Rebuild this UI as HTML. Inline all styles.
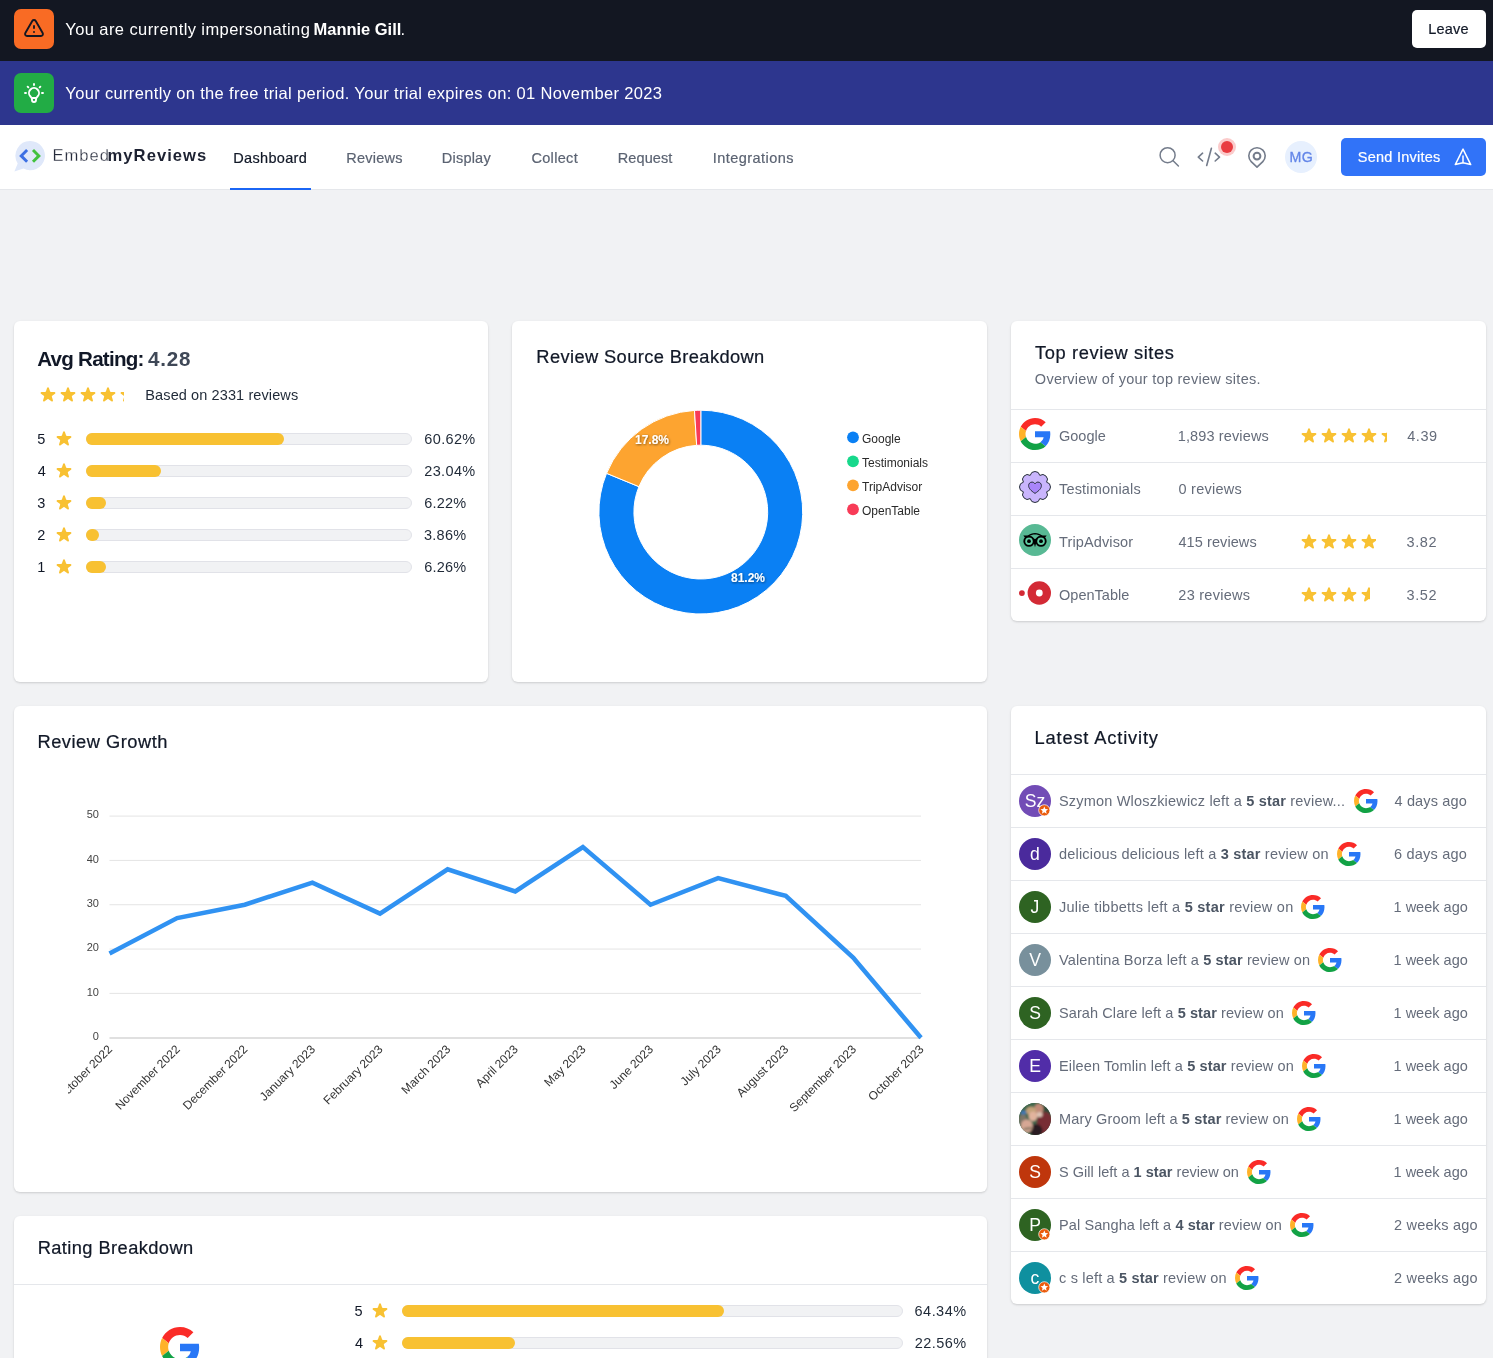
<!DOCTYPE html>
<html lang="en"><head><meta charset="utf-8"><title>Dashboard - EmbedMyReviews</title>
<style>
html,body{margin:0;padding:0}
body{width:1493px;height:1358px;overflow:hidden;position:relative;background:#f1f2f4;font-family:"Liberation Sans",sans-serif;}
#root{position:absolute;left:0;top:0;width:1493px;height:1358px;overflow:hidden;will-change:transform}
.a{position:absolute;display:block}
.t{position:absolute;white-space:nowrap;line-height:20px;display:block}
.t b{font-weight:700;color:#4b5563}
.card{position:absolute;background:#fff;border-radius:6px;box-shadow:0 1px 3px rgba(0,0,0,.10),0 1px 2px rgba(0,0,0,.07)}
.hr{position:absolute;height:1px;background:#e5e7eb}
.trk{position:absolute;height:12px;box-sizing:border-box;border:1px solid #e1e2e8;background:#f1f2f4;border-radius:6px}
.trk i{position:absolute;left:-1px;top:-1px;height:12px;background:#f8c132;border-radius:6px;display:block}
.av{position:absolute;width:32px;height:32px;border-radius:50%;color:#fff;text-align:center;line-height:32px;font-size:17.6px}
</style></head>
<body>
<div id="root">

<div class="a" style="left:0;top:0;width:1493px;height:61px;background:#131722"></div>
<div class="a" style="left:0;top:61px;width:1493px;height:64px;background:#2d368e"></div>
<div class="a" style="left:14px;top:9px;width:40px;height:40px;border-radius:7px;background:#f96b24"></div>
<svg class="a" style="left:22px;top:16.5px" width="24" height="24" viewBox="0 0 24 24" fill="none" stroke="#131722" stroke-width="1.9" stroke-linecap="round" stroke-linejoin="round"><path d="M12 9v2m0 4h.01m-6.938 4h13.856c1.54 0 2.502-1.667 1.732-3L13.732 4c-.77-1.333-2.694-1.333-3.464 0L3.34 16c-.77 1.333.192 3 1.732 3z"/></svg>
<div class="a" style="left:14px;top:73px;width:40px;height:40px;border-radius:7px;background:#22ac45"></div>
<svg class="a" style="left:22px;top:81px" width="24" height="24" viewBox="0 0 24 24" fill="none" stroke="#fff" stroke-width="1.9" stroke-linecap="round" stroke-linejoin="round"><path d="M9.663 17h4.673M12 3v1m6.364 1.636l-.707.707M21 12h-1M4 12H3m3.343-5.657l-.707-.707m2.828 9.9a5 5 0 117.072 0l-.548.547A3.374 3.374 0 0014 18.469V19a2 2 0 11-4 0v-.531c0-.895-.356-1.754-.988-2.386l-.548-.547z"/></svg>
<span class="t " id="b1a" style="left:65.32px;top:19.28px;font-size:16.5px;color:#fff;letter-spacing:0.407px;">You are currently impersonating</span>
<span class="t " id="b1b" style="left:313.62px;top:19.28px;font-size:16.5px;color:#fff;font-weight:700;letter-spacing:-0.031px;">Mannie Gill</span>
<span class="t " id="b1c" style="left:400.59px;top:19.28px;font-size:16.5px;color:#fff;">.</span>
<span class="t " id="b2" style="left:65.32px;top:83.28px;font-size:16.5px;color:#fff;letter-spacing:0.339px;">Your currently on the free trial period. Your trial expires on: 01 November 2023</span>
<div class="a" style="left:1412px;top:10px;width:74px;height:38px;border-radius:5px;background:#fff"></div>
<span class="t " id="leave" style="left:1428.26px;top:18.98px;font-size:14.5px;color:#111827;letter-spacing:0.219px;-webkit-text-stroke:0.2px #111827;">Leave</span>
<div class="a" style="left:0;top:125px;width:1493px;height:64px;background:#fff;border-bottom:1px solid #e5e7eb"></div>
<svg class="a" style="left:12px;top:138px" width="36" height="36" viewBox="0 0 36 36"><path fill="#dfe8fa" d="M18.4 3.1a14.6 14.6 0 1 1-6.9 27.5L2.4 33.5l3.3-8.1A14.6 14.6 0 0 1 18.4 3.100z"/><path fill="none" stroke="#3c6fe3" stroke-width="2.9" d="M15.1 12l-5.9 5.9 5.9 5.9"/><path fill="none" stroke="#42c13e" stroke-width="2.9" d="M21 12l5.9 5.9-5.9 5.9"/></svg>
<span class="t thin" id="lg1" style="left:52.54px;top:146.25px;font-size:16.6px;color:#262b3b;letter-spacing:0.961px;-webkit-text-stroke:0.28px #fff;">Embed</span>
<span class="t " id="lg2" style="left:107.57px;top:146.25px;font-size:16.6px;color:#1d2232;font-weight:700;letter-spacing:1.038px;">myReviews</span>
<div class="a" style="left:230px;top:188px;width:81px;height:2px;background:#1b66f5"></div>
<span class="t " id="nav0" style="left:233.19px;top:147.98px;font-size:14.5px;color:#111827;letter-spacing:0.336px;-webkit-text-stroke:0.2px #111827;">Dashboard</span>
<span class="t " id="nav1" style="left:346.35px;top:147.98px;font-size:14.5px;color:#5b6372;letter-spacing:0.212px;-webkit-text-stroke:0.2px #5b6372;">Reviews</span>
<span class="t " id="nav2" style="left:441.86px;top:147.98px;font-size:14.5px;color:#5b6372;letter-spacing:0.204px;-webkit-text-stroke:0.2px #5b6372;">Display</span>
<span class="t " id="nav3" style="left:531.39px;top:147.98px;font-size:14.5px;color:#5b6372;letter-spacing:0.340px;-webkit-text-stroke:0.2px #5b6372;">Collect</span>
<span class="t " id="nav4" style="left:617.82px;top:147.98px;font-size:14.5px;color:#5b6372;letter-spacing:0.086px;-webkit-text-stroke:0.2px #5b6372;">Request</span>
<span class="t " id="nav5" style="left:712.75px;top:147.98px;font-size:14.5px;color:#5b6372;letter-spacing:0.459px;-webkit-text-stroke:0.2px #5b6372;">Integrations</span>
<svg class="a" style="left:1155px;top:143px" width="28" height="28" viewBox="0 0 28 28" fill="none" stroke="#747c8b" stroke-width="1.5" stroke-linecap="round"><circle cx="12.6" cy="12.2" r="7.5"/><path d="M18.1 17.7l5.3 5.3"/></svg>
<svg class="a" style="left:1195px;top:143px" width="28" height="28" viewBox="0 0 28 28" fill="none" stroke="#747c8b" stroke-width="1.6" stroke-linecap="round" stroke-linejoin="round"><path d="M7.6 10.2L3.3 14.1l4.3 3.9M16.4 5.2l-4.7 17.3M20.2 10.2l4.3 3.9-4.3 3.900"/></svg>
<div class="a" style="left:1221px;top:141px;width:12px;height:12px;border-radius:50%;background:#e93c41;box-shadow:0 0 0 3px rgba(239,68,68,.28)"></div>
<svg class="a" style="left:1245px;top:144px" width="24" height="26" viewBox="0 0 24 26" fill="none" stroke="#747c8b" stroke-linejoin="round"><path stroke-width="1.6" d="M12 3.8c4.6 0 8.2 3.6 8.2 8 0 2.300-.9 4.300-2.400 5.800L12 23.200l-5.800-5.600C4.700 16.100 3.800 14.100 3.800 11.800c0-4.400 3.600-8 8.200-8z"/><circle cx="12" cy="12.100" r="3.400" stroke-width="2"/></svg>
<div class="a" style="left:1285px;top:141px;width:32px;height:32px;border-radius:50%;background:#e7f0fe"></div>
<span class="t " id="mg" style="left:1289.39px;top:147.08px;font-size:14.2px;color:#6386e8;letter-spacing:0.590px;-webkit-text-stroke:0.3px #6386e8;">MG</span>
<div class="a" style="left:1341px;top:138px;width:145px;height:38px;border-radius:5px;background:#3173f8"></div>
<span class="t " id="send" style="left:1357.81px;top:146.98px;font-size:14.5px;color:#fff;letter-spacing:0.247px;-webkit-text-stroke:0.2px #fff;">Send Invites</span>
<svg class="a" style="left:1451px;top:145px" width="24" height="24" viewBox="0 0 24 24" fill="none" stroke="#fff" stroke-width="1.5" stroke-linejoin="round" stroke-linecap="round"><path d="M12 4.100L4.300 19.600 12 17.700l7.700 1.900L12 4.100zM12 17.700V11"/></svg>
<div class="card" style="left:14px;top:321px;width:474px;height:361px"></div>
<div class="card" style="left:512px;top:321px;width:475px;height:361px"></div>
<div class="card" style="left:1011px;top:321px;width:475px;height:300px"></div>
<div class="card" style="left:14px;top:706px;width:973px;height:486px"></div>
<div class="card" style="left:1011px;top:706px;width:475px;height:598px"></div>
<div class="card" style="left:14px;top:1216px;width:973px;height:200px"></div>
<span class="t " id="avg1" style="left:37.23px;top:348.86px;font-size:20.6px;color:#111827;font-weight:700;letter-spacing:-0.763px;">Avg Rating:</span>
<span class="t " id="avg2" style="left:148.09px;top:348.86px;font-size:20.6px;color:#3f4857;font-weight:700;letter-spacing:0.777px;">4.28</span>
<div class="a" style="left:38.2px;top:385.2px;width:85.60px;height:20px;overflow:hidden"><svg width="100" height="20" viewBox="0 0 100 20" style="display:block">
<path fill="#f8c132" transform="translate(0 0)" d="M9.049 2.927c.3-.921 1.603-.921 1.902 0l1.07 3.292a1 1 0 00.95.69h3.462c.969 0 1.371 1.24.588 1.81l-2.8 2.034a1 1 0 00-.364 1.118l1.07 3.292c.3.921-.755 1.688-1.54 1.118l-2.8-2.034a1 1 0 00-1.175 0l-2.8 2.034c-.784.57-1.838-.197-1.539-1.118l1.07-3.292a1 1 0 00-.364-1.118L2.98 8.72c-.783-.57-.38-1.81.588-1.81h3.461a1 1 0 00.951-.69l1.07-3.292z"/>
<path fill="#f8c132" transform="translate(20 0)" d="M9.049 2.927c.3-.921 1.603-.921 1.902 0l1.07 3.292a1 1 0 00.95.69h3.462c.969 0 1.371 1.24.588 1.81l-2.8 2.034a1 1 0 00-.364 1.118l1.07 3.292c.3.921-.755 1.688-1.54 1.118l-2.8-2.034a1 1 0 00-1.175 0l-2.8 2.034c-.784.57-1.838-.197-1.539-1.118l1.07-3.292a1 1 0 00-.364-1.118L2.98 8.72c-.783-.57-.38-1.81.588-1.81h3.461a1 1 0 00.951-.69l1.07-3.292z"/>
<path fill="#f8c132" transform="translate(40 0)" d="M9.049 2.927c.3-.921 1.603-.921 1.902 0l1.07 3.292a1 1 0 00.95.69h3.462c.969 0 1.371 1.24.588 1.81l-2.8 2.034a1 1 0 00-.364 1.118l1.07 3.292c.3.921-.755 1.688-1.54 1.118l-2.8-2.034a1 1 0 00-1.175 0l-2.8 2.034c-.784.57-1.838-.197-1.539-1.118l1.07-3.292a1 1 0 00-.364-1.118L2.98 8.72c-.783-.57-.38-1.81.588-1.81h3.461a1 1 0 00.951-.69l1.07-3.292z"/>
<path fill="#f8c132" transform="translate(60 0)" d="M9.049 2.927c.3-.921 1.603-.921 1.902 0l1.07 3.292a1 1 0 00.95.69h3.462c.969 0 1.371 1.24.588 1.81l-2.8 2.034a1 1 0 00-.364 1.118l1.07 3.292c.3.921-.755 1.688-1.54 1.118l-2.8-2.034a1 1 0 00-1.175 0l-2.8 2.034c-.784.57-1.838-.197-1.539-1.118l1.07-3.292a1 1 0 00-.364-1.118L2.98 8.72c-.783-.57-.38-1.81.588-1.81h3.461a1 1 0 00.951-.69l1.07-3.292z"/>
<path fill="#f8c132" transform="translate(80 0)" d="M9.049 2.927c.3-.921 1.603-.921 1.902 0l1.07 3.292a1 1 0 00.95.69h3.462c.969 0 1.371 1.24.588 1.81l-2.8 2.034a1 1 0 00-.364 1.118l1.07 3.292c.3.921-.755 1.688-1.54 1.118l-2.8-2.034a1 1 0 00-1.175 0l-2.8 2.034c-.784.57-1.838-.197-1.539-1.118l1.07-3.292a1 1 0 00-.364-1.118L2.98 8.72c-.783-.57-.38-1.81.588-1.81h3.461a1 1 0 00.951-.69l1.07-3.292z"/>
</svg></div>
<span class="t " id="based" style="left:145.34px;top:384.98px;font-size:14.5px;color:#1f2937;letter-spacing:0.107px;">Based on 2331 reviews</span>
<span class="t " id="r1n0" style="left:37.15px;top:428.98px;font-size:14.5px;color:#111827;">5</span>
<svg class="a" style="left:54.1px;top:429px" width="20" height="20" viewBox="0 0 20 20"><path fill="#f8c132" d="M9.049 2.927c.3-.921 1.603-.921 1.902 0l1.07 3.292a1 1 0 00.95.69h3.462c.969 0 1.371 1.24.588 1.81l-2.8 2.034a1 1 0 00-.364 1.118l1.07 3.292c.3.921-.755 1.688-1.54 1.118l-2.8-2.034a1 1 0 00-1.175 0l-2.8 2.034c-.784.57-1.838-.197-1.539-1.118l1.07-3.292a1 1 0 00-.364-1.118L2.98 8.72c-.783-.57-.38-1.81.588-1.81h3.461a1 1 0 00.951-.69l1.07-3.292z"/></svg>
<div class="trk" style="left:86px;top:433px;width:326px"><i style="width:197.6px"></i></div>
<span class="t " id="r1p0" style="left:424.33px;top:428.98px;font-size:14.5px;color:#1f2937;letter-spacing:0.350px;">60.62%</span>
<span class="t " id="r1n1" style="left:37.79px;top:460.98px;font-size:14.5px;color:#111827;">4</span>
<svg class="a" style="left:54.1px;top:461px" width="20" height="20" viewBox="0 0 20 20"><path fill="#f8c132" d="M9.049 2.927c.3-.921 1.603-.921 1.902 0l1.07 3.292a1 1 0 00.95.69h3.462c.969 0 1.371 1.24.588 1.81l-2.8 2.034a1 1 0 00-.364 1.118l1.07 3.292c.3.921-.755 1.688-1.54 1.118l-2.8-2.034a1 1 0 00-1.175 0l-2.8 2.034c-.784.57-1.838-.197-1.539-1.118l1.07-3.292a1 1 0 00-.364-1.118L2.98 8.72c-.783-.57-.38-1.81.588-1.81h3.461a1 1 0 00.951-.69l1.07-3.292z"/></svg>
<div class="trk" style="left:86px;top:465px;width:326px"><i style="width:75.1px"></i></div>
<span class="t " id="r1p1" style="left:424.32px;top:460.98px;font-size:14.5px;color:#1f2937;letter-spacing:0.342px;">23.04%</span>
<span class="t " id="r1n2" style="left:37.36px;top:492.98px;font-size:14.5px;color:#111827;">3</span>
<svg class="a" style="left:54.1px;top:493px" width="20" height="20" viewBox="0 0 20 20"><path fill="#f8c132" d="M9.049 2.927c.3-.921 1.603-.921 1.902 0l1.07 3.292a1 1 0 00.95.69h3.462c.969 0 1.371 1.24.588 1.81l-2.8 2.034a1 1 0 00-.364 1.118l1.07 3.292c.3.921-.755 1.688-1.54 1.118l-2.8-2.034a1 1 0 00-1.175 0l-2.8 2.034c-.784.57-1.838-.197-1.539-1.118l1.07-3.292a1 1 0 00-.364-1.118L2.98 8.72c-.783-.57-.38-1.81.588-1.81h3.461a1 1 0 00.951-.69l1.07-3.292z"/></svg>
<div class="trk" style="left:86px;top:497px;width:326px"><i style="width:20.3px"></i></div>
<span class="t " id="r1p2" style="left:424.33px;top:492.98px;font-size:14.5px;color:#1f2937;letter-spacing:0.166px;">6.22%</span>
<span class="t " id="r1n3" style="left:37.33px;top:524.98px;font-size:14.5px;color:#111827;">2</span>
<svg class="a" style="left:54.1px;top:525px" width="20" height="20" viewBox="0 0 20 20"><path fill="#f8c132" d="M9.049 2.927c.3-.921 1.603-.921 1.902 0l1.07 3.292a1 1 0 00.95.69h3.462c.969 0 1.371 1.24.588 1.81l-2.8 2.034a1 1 0 00-.364 1.118l1.07 3.292c.3.921-.755 1.688-1.54 1.118l-2.8-2.034a1 1 0 00-1.175 0l-2.8 2.034c-.784.57-1.838-.197-1.539-1.118l1.07-3.292a1 1 0 00-.364-1.118L2.98 8.72c-.783-.57-.38-1.81.588-1.81h3.461a1 1 0 00.951-.69l1.07-3.292z"/></svg>
<div class="trk" style="left:86px;top:529px;width:326px"><i style="width:12.6px"></i></div>
<span class="t " id="r1p3" style="left:424.02px;top:524.98px;font-size:14.5px;color:#1f2937;letter-spacing:0.246px;">3.86%</span>
<span class="t " id="r1n4" style="left:37.15px;top:556.98px;font-size:14.5px;color:#111827;">1</span>
<svg class="a" style="left:54.1px;top:557px" width="20" height="20" viewBox="0 0 20 20"><path fill="#f8c132" d="M9.049 2.927c.3-.921 1.603-.921 1.902 0l1.07 3.292a1 1 0 00.95.69h3.462c.969 0 1.371 1.24.588 1.81l-2.8 2.034a1 1 0 00-.364 1.118l1.07 3.292c.3.921-.755 1.688-1.54 1.118l-2.8-2.034a1 1 0 00-1.175 0l-2.8 2.034c-.784.57-1.838-.197-1.539-1.118l1.07-3.292a1 1 0 00-.364-1.118L2.98 8.72c-.783-.57-.38-1.81.588-1.81h3.461a1 1 0 00.951-.69l1.07-3.292z"/></svg>
<div class="trk" style="left:86px;top:561px;width:326px"><i style="width:20.4px"></i></div>
<span class="t " id="r1p4" style="left:424.33px;top:556.98px;font-size:14.5px;color:#1f2937;letter-spacing:0.166px;">6.26%</span>
<span class="t " id="t2" style="left:536.32px;top:346.66px;font-size:18.3px;color:#111827;letter-spacing:0.385px;-webkit-text-stroke:0.22px #111827;">Review Source Breakdown</span>
<span class="t " id="t3" style="left:1035.12px;top:342.66px;font-size:18.3px;color:#111827;letter-spacing:0.584px;-webkit-text-stroke:0.22px #111827;">Top review sites</span>
<span class="t " id="t3s" style="left:1034.85px;top:368.98px;font-size:14.5px;color:#656c7a;letter-spacing:0.270px;">Overview of your top review sites.</span>
<div class="hr" style="left:1011.00px;top:409px;width:475.00px"></div>
<div class="hr" style="left:1011.00px;top:462px;width:475.00px"></div>
<div class="hr" style="left:1011.00px;top:515px;width:475.00px"></div>
<div class="hr" style="left:1011.00px;top:568px;width:475.00px"></div>
<span class="t " id="s0n" style="left:1059.00px;top:425.98px;font-size:14.5px;color:#656c7a;letter-spacing:-0.008px;">Google</span>
<span class="t " id="s0r" style="left:1177.79px;top:425.98px;font-size:14.5px;color:#656c7a;letter-spacing:0.124px;">1,893 reviews</span>
<div class="a" style="left:1299.3px;top:426px;width:87.80px;height:20px;overflow:hidden"><svg width="100" height="20" viewBox="0 0 100 20" style="display:block">
<path fill="#f8c132" transform="translate(0 0)" d="M9.049 2.927c.3-.921 1.603-.921 1.902 0l1.07 3.292a1 1 0 00.95.69h3.462c.969 0 1.371 1.24.588 1.81l-2.8 2.034a1 1 0 00-.364 1.118l1.07 3.292c.3.921-.755 1.688-1.54 1.118l-2.8-2.034a1 1 0 00-1.175 0l-2.8 2.034c-.784.57-1.838-.197-1.539-1.118l1.07-3.292a1 1 0 00-.364-1.118L2.98 8.72c-.783-.57-.38-1.81.588-1.81h3.461a1 1 0 00.951-.69l1.07-3.292z"/>
<path fill="#f8c132" transform="translate(20 0)" d="M9.049 2.927c.3-.921 1.603-.921 1.902 0l1.07 3.292a1 1 0 00.95.69h3.462c.969 0 1.371 1.24.588 1.81l-2.8 2.034a1 1 0 00-.364 1.118l1.07 3.292c.3.921-.755 1.688-1.54 1.118l-2.8-2.034a1 1 0 00-1.175 0l-2.8 2.034c-.784.57-1.838-.197-1.539-1.118l1.07-3.292a1 1 0 00-.364-1.118L2.98 8.72c-.783-.57-.38-1.81.588-1.81h3.461a1 1 0 00.951-.69l1.07-3.292z"/>
<path fill="#f8c132" transform="translate(40 0)" d="M9.049 2.927c.3-.921 1.603-.921 1.902 0l1.07 3.292a1 1 0 00.95.69h3.462c.969 0 1.371 1.24.588 1.81l-2.8 2.034a1 1 0 00-.364 1.118l1.07 3.292c.3.921-.755 1.688-1.54 1.118l-2.8-2.034a1 1 0 00-1.175 0l-2.8 2.034c-.784.57-1.838-.197-1.539-1.118l1.07-3.292a1 1 0 00-.364-1.118L2.98 8.72c-.783-.57-.38-1.81.588-1.81h3.461a1 1 0 00.951-.69l1.07-3.292z"/>
<path fill="#f8c132" transform="translate(60 0)" d="M9.049 2.927c.3-.921 1.603-.921 1.902 0l1.07 3.292a1 1 0 00.95.69h3.462c.969 0 1.371 1.24.588 1.81l-2.8 2.034a1 1 0 00-.364 1.118l1.07 3.292c.3.921-.755 1.688-1.54 1.118l-2.8-2.034a1 1 0 00-1.175 0l-2.8 2.034c-.784.57-1.838-.197-1.539-1.118l1.07-3.292a1 1 0 00-.364-1.118L2.98 8.72c-.783-.57-.38-1.81.588-1.81h3.461a1 1 0 00.951-.69l1.07-3.292z"/>
<path fill="#f8c132" transform="translate(80 0)" d="M9.049 2.927c.3-.921 1.603-.921 1.902 0l1.07 3.292a1 1 0 00.95.69h3.462c.969 0 1.371 1.24.588 1.81l-2.8 2.034a1 1 0 00-.364 1.118l1.07 3.292c.3.921-.755 1.688-1.54 1.118l-2.8-2.034a1 1 0 00-1.175 0l-2.8 2.034c-.784.57-1.838-.197-1.539-1.118l1.07-3.292a1 1 0 00-.364-1.118L2.98 8.72c-.783-.57-.38-1.81.588-1.81h3.461a1 1 0 00.951-.69l1.07-3.292z"/>
</svg></div>
<span class="t " id="s0t" style="left:1407.14px;top:425.98px;font-size:14.5px;color:#656c7a;letter-spacing:0.588px;">4.39</span>
<span class="t " id="s1n" style="left:1059.00px;top:478.98px;font-size:14.5px;color:#656c7a;letter-spacing:0.179px;">Testimonials</span>
<span class="t " id="s1r" style="left:1178.49px;top:478.98px;font-size:14.5px;color:#656c7a;letter-spacing:0.243px;">0 reviews</span>
<span class="t " id="s2n" style="left:1059.00px;top:531.98px;font-size:14.5px;color:#656c7a;letter-spacing:0.135px;">TripAdvisor</span>
<span class="t " id="s2r" style="left:1178.47px;top:531.98px;font-size:14.5px;color:#656c7a;letter-spacing:0.081px;">415 reviews</span>
<div class="a" style="left:1299.3px;top:532px;width:76.40px;height:20px;overflow:hidden"><svg width="100" height="20" viewBox="0 0 100 20" style="display:block">
<path fill="#f8c132" transform="translate(0 0)" d="M9.049 2.927c.3-.921 1.603-.921 1.902 0l1.07 3.292a1 1 0 00.95.69h3.462c.969 0 1.371 1.24.588 1.81l-2.8 2.034a1 1 0 00-.364 1.118l1.07 3.292c.3.921-.755 1.688-1.54 1.118l-2.8-2.034a1 1 0 00-1.175 0l-2.8 2.034c-.784.57-1.838-.197-1.539-1.118l1.07-3.292a1 1 0 00-.364-1.118L2.98 8.72c-.783-.57-.38-1.81.588-1.81h3.461a1 1 0 00.951-.69l1.07-3.292z"/>
<path fill="#f8c132" transform="translate(20 0)" d="M9.049 2.927c.3-.921 1.603-.921 1.902 0l1.07 3.292a1 1 0 00.95.69h3.462c.969 0 1.371 1.24.588 1.81l-2.8 2.034a1 1 0 00-.364 1.118l1.07 3.292c.3.921-.755 1.688-1.54 1.118l-2.8-2.034a1 1 0 00-1.175 0l-2.8 2.034c-.784.57-1.838-.197-1.539-1.118l1.07-3.292a1 1 0 00-.364-1.118L2.98 8.72c-.783-.57-.38-1.81.588-1.81h3.461a1 1 0 00.951-.69l1.07-3.292z"/>
<path fill="#f8c132" transform="translate(40 0)" d="M9.049 2.927c.3-.921 1.603-.921 1.902 0l1.07 3.292a1 1 0 00.95.69h3.462c.969 0 1.371 1.24.588 1.81l-2.8 2.034a1 1 0 00-.364 1.118l1.07 3.292c.3.921-.755 1.688-1.54 1.118l-2.8-2.034a1 1 0 00-1.175 0l-2.8 2.034c-.784.57-1.838-.197-1.539-1.118l1.07-3.292a1 1 0 00-.364-1.118L2.98 8.72c-.783-.57-.38-1.81.588-1.81h3.461a1 1 0 00.951-.69l1.07-3.292z"/>
<path fill="#f8c132" transform="translate(60 0)" d="M9.049 2.927c.3-.921 1.603-.921 1.902 0l1.07 3.292a1 1 0 00.95.69h3.462c.969 0 1.371 1.24.588 1.81l-2.8 2.034a1 1 0 00-.364 1.118l1.07 3.292c.3.921-.755 1.688-1.54 1.118l-2.8-2.034a1 1 0 00-1.175 0l-2.8 2.034c-.784.57-1.838-.197-1.539-1.118l1.07-3.292a1 1 0 00-.364-1.118L2.98 8.72c-.783-.57-.38-1.81.588-1.81h3.461a1 1 0 00.951-.69l1.07-3.292z"/>
<path fill="#f8c132" transform="translate(80 0)" d="M9.049 2.927c.3-.921 1.603-.921 1.902 0l1.07 3.292a1 1 0 00.95.69h3.462c.969 0 1.371 1.24.588 1.81l-2.8 2.034a1 1 0 00-.364 1.118l1.07 3.292c.3.921-.755 1.688-1.54 1.118l-2.8-2.034a1 1 0 00-1.175 0l-2.8 2.034c-.784.57-1.838-.197-1.539-1.118l1.07-3.292a1 1 0 00-.364-1.118L2.98 8.72c-.783-.57-.38-1.81.588-1.81h3.461a1 1 0 00.951-.69l1.07-3.292z"/>
</svg></div>
<span class="t " id="s2t" style="left:1406.61px;top:531.98px;font-size:14.5px;color:#656c7a;letter-spacing:0.546px;">3.82</span>
<span class="t " id="s3n" style="left:1059.00px;top:584.98px;font-size:14.5px;color:#656c7a;letter-spacing:0.023px;">OpenTable</span>
<span class="t " id="s3r" style="left:1178.32px;top:584.98px;font-size:14.5px;color:#656c7a;letter-spacing:0.257px;">23 reviews</span>
<div class="a" style="left:1299.3px;top:585px;width:70.40px;height:20px;overflow:hidden"><svg width="100" height="20" viewBox="0 0 100 20" style="display:block">
<path fill="#f8c132" transform="translate(0 0)" d="M9.049 2.927c.3-.921 1.603-.921 1.902 0l1.07 3.292a1 1 0 00.95.69h3.462c.969 0 1.371 1.24.588 1.81l-2.8 2.034a1 1 0 00-.364 1.118l1.07 3.292c.3.921-.755 1.688-1.54 1.118l-2.8-2.034a1 1 0 00-1.175 0l-2.8 2.034c-.784.57-1.838-.197-1.539-1.118l1.07-3.292a1 1 0 00-.364-1.118L2.98 8.72c-.783-.57-.38-1.81.588-1.81h3.461a1 1 0 00.951-.69l1.07-3.292z"/>
<path fill="#f8c132" transform="translate(20 0)" d="M9.049 2.927c.3-.921 1.603-.921 1.902 0l1.07 3.292a1 1 0 00.95.69h3.462c.969 0 1.371 1.24.588 1.81l-2.8 2.034a1 1 0 00-.364 1.118l1.07 3.292c.3.921-.755 1.688-1.54 1.118l-2.8-2.034a1 1 0 00-1.175 0l-2.8 2.034c-.784.57-1.838-.197-1.539-1.118l1.07-3.292a1 1 0 00-.364-1.118L2.98 8.72c-.783-.57-.38-1.81.588-1.81h3.461a1 1 0 00.951-.69l1.07-3.292z"/>
<path fill="#f8c132" transform="translate(40 0)" d="M9.049 2.927c.3-.921 1.603-.921 1.902 0l1.07 3.292a1 1 0 00.95.69h3.462c.969 0 1.371 1.24.588 1.81l-2.8 2.034a1 1 0 00-.364 1.118l1.07 3.292c.3.921-.755 1.688-1.54 1.118l-2.8-2.034a1 1 0 00-1.175 0l-2.8 2.034c-.784.57-1.838-.197-1.539-1.118l1.07-3.292a1 1 0 00-.364-1.118L2.98 8.72c-.783-.57-.38-1.81.588-1.81h3.461a1 1 0 00.951-.69l1.07-3.292z"/>
<path fill="#f8c132" transform="translate(60 0)" d="M9.049 2.927c.3-.921 1.603-.921 1.902 0l1.07 3.292a1 1 0 00.95.69h3.462c.969 0 1.371 1.24.588 1.81l-2.8 2.034a1 1 0 00-.364 1.118l1.07 3.292c.3.921-.755 1.688-1.54 1.118l-2.8-2.034a1 1 0 00-1.175 0l-2.8 2.034c-.784.57-1.838-.197-1.539-1.118l1.07-3.292a1 1 0 00-.364-1.118L2.98 8.72c-.783-.57-.38-1.81.588-1.81h3.461a1 1 0 00.951-.69l1.07-3.292z"/>
<path fill="#f8c132" transform="translate(80 0)" d="M9.049 2.927c.3-.921 1.603-.921 1.902 0l1.07 3.292a1 1 0 00.95.69h3.462c.969 0 1.371 1.24.588 1.81l-2.8 2.034a1 1 0 00-.364 1.118l1.07 3.292c.3.921-.755 1.688-1.54 1.118l-2.8-2.034a1 1 0 00-1.175 0l-2.8 2.034c-.784.57-1.838-.197-1.539-1.118l1.07-3.292a1 1 0 00-.364-1.118L2.98 8.72c-.783-.57-.38-1.81.588-1.81h3.461a1 1 0 00.951-.69l1.07-3.292z"/>
</svg></div>
<span class="t " id="s3t" style="left:1406.61px;top:584.98px;font-size:14.5px;color:#656c7a;letter-spacing:0.546px;">3.52</span>
<svg class="a" style="left:1019px;top:418px" width="32" height="32" viewBox="0 0 48 48"><path fill="#FA2B27" d="M24 9.5c3.54 0 6.71 1.22 9.21 3.6l6.85-6.85C35.9 2.38 30.47 0 24 0 14.62 0 6.51 5.38 2.56 13.22l7.98 6.19C12.43 13.72 17.74 9.5 24 9.5z"/><path fill="#2877F6" d="M46.98 24.55c0-1.57-.15-3.09-.38-4.55H24v9.02h12.94c-.58 2.96-2.26 5.48-4.78 7.18l7.73 6c4.51-4.18 7.09-10.36 7.09-17.65z"/><path fill="#FFB229" d="M10.53 28.59c-.48-1.45-.76-2.99-.76-4.59s.27-3.14.76-4.59l-7.98-6.19C.92 16.46 0 20.12 0 24c0 3.88.92 7.54 2.56 10.78l7.97-6.19z"/><path fill="#12A245" d="M24 48c6.48 0 11.93-2.13 15.89-5.81l-7.73-6c-2.15 1.45-4.92 2.3-8.16 2.3-6.26 0-11.57-4.22-13.47-9.91l-7.98 6.19C6.51 42.62 14.62 48 24 48z"/></svg>
<svg class="a" style="left:1019px;top:471px" width="32" height="32" viewBox="0 0 32 32"><path d="M11.20 4.41A4.9 4.9 0 0 1 20.80 4.41A4.9 4.9 0 0 1 27.59 11.20A4.9 4.9 0 0 1 27.59 20.80A4.9 4.9 0 0 1 20.80 27.59A4.9 4.9 0 0 1 11.20 27.59A4.9 4.9 0 0 1 4.41 20.80A4.9 4.9 0 0 1 4.41 11.20A4.9 4.9 0 0 1 11.20 4.41z" fill="#c9b5fc" stroke="#27303a" stroke-width="1" stroke-linejoin="round"/><path d="M16 22.400c-4.400-2.800-6.400-5.300-6.400-7.800 0-2 1.500-3.500 3.400-3.500 1.200 0 2.300.6 3 1.700.7-1.100 1.800-1.700 3-1.700 1.900 0 3.400 1.500 3.400 3.500 0 2.500-2 5-6.400 7.800z" fill="#a985fa" stroke="#27303a" stroke-width="1" stroke-linejoin="round"/></svg>
<svg class="a" style="left:1019px;top:524px" width="32" height="32" viewBox="0 0 32 32"><circle cx="16" cy="16" r="16" fill="#58b994"/><g fill="none" stroke="#000" stroke-width="1.9"><circle cx="10" cy="17.200" r="4.700"/><circle cx="22" cy="17.200" r="4.700"/></g><g fill="#62d0a6" stroke="none"><circle cx="10" cy="17.200" r="3.300"/><circle cx="22" cy="17.200" r="3.300"/></g><circle cx="10" cy="17.200" r="1.900" fill="#000"/><circle cx="22" cy="17.200" r="1.900" fill="#000"/><path d="M4.300 11.500h4.500c2-1.700 4.500-2.600 7.200-2.600s5.200.9 7.200 2.600h4.500l-2 2.500c-1.300-1.300-2.500-1.800-3.800-1.800-1.600-1.100-3.600-1.600-5.900-1.600s-4.300.5-5.900 1.600c-1.300 0-2.500.5-3.800 1.800z" fill="#000"/><path d="M13.300 13.800L16 23.300l2.700-9.500c-.7.700-1.600 1.100-2.700 1.100s-2-.4-2.700-1.100z" fill="#000"/></svg>
<svg class="a" style="left:1019px;top:577px" width="32" height="32" viewBox="0 0 32 32"><circle cx="2.900" cy="16.100" r="2.900" fill="#d32a35"/><circle cx="20.300" cy="16" r="11.700" fill="#d32a35"/><circle cx="20.300" cy="16" r="3.400" fill="#fff"/></svg>
<svg class="a" style="left:512px;top:321px" width="475" height="361" viewBox="512 321 475 361" font-family="Liberation Sans, sans-serif">
<defs><filter id="ts" x="-20%" y="-30%" width="140%" height="160%"><feDropShadow dx="0.6" dy="0.8" stdDeviation="0.9" flood-color="#000" flood-opacity=".55"/></filter></defs>
<path d="M700.80 410.20A101.9 101.9 0 1 1 606.56 473.34L638.93 486.65A66.9 66.9 0 1 0 700.80 445.20z" fill="#0a80f4" stroke="#fff" stroke-width="1"/>
<path d="M606.56 473.34A101.9 101.9 0 0 1 694.49 410.40L696.66 445.33A66.9 66.9 0 0 0 638.93 486.65z" fill="#fda430" stroke="#fff" stroke-width="1"/>
<path d="M694.49 410.40A101.9 101.9 0 0 1 700.80 410.20L700.80 445.20A66.9 66.9 0 0 0 696.66 445.33z" fill="#f83b57" stroke="#fff" stroke-width="1"/>
<g fill="#fff" font-size="12" font-weight="700" text-anchor="middle" filter="url(#ts)"><text x="748" y="582.1">81.2%</text><text x="652" y="443.500">17.8%</text></g>
<circle cx="853" cy="437.3" r="5.900" fill="#0a80f4"/><text x="862" y="443.3" font-size="12" fill="#2a2a2a">Google</text>
<circle cx="853" cy="461.3" r="5.900" fill="#17d88b"/><text x="862" y="467.3" font-size="12" fill="#2a2a2a">Testimonials</text>
<circle cx="853" cy="485.3" r="5.900" fill="#fda430"/><text x="862" y="491.3" font-size="12" fill="#2a2a2a">TripAdvisor</text>
<circle cx="853" cy="509.3" r="5.900" fill="#f83b57"/><text x="862" y="515.3" font-size="12" fill="#2a2a2a">OpenTable</text>
</svg>
<span class="t " id="t4" style="left:37.48px;top:731.66px;font-size:18.3px;color:#111827;letter-spacing:0.499px;-webkit-text-stroke:0.22px #111827;">Review Growth</span>
<svg class="a" style="left:14px;top:706px" width="973" height="486" viewBox="14 706 973 486" font-family="Liberation Sans, sans-serif">
<defs><clipPath id="gc"><rect x="68" y="1040" width="900" height="140"/></clipPath></defs>
<rect x="109.5" y="1037" width="811.5" height="2" fill="#e0e0e0"/>
<text x="98.900" y="1039.8" font-size="11" fill="#444" text-anchor="end">0</text>
<rect x="109.5" y="992.88" width="811.5" height="1" fill="#e4e4e4"/>
<text x="98.900" y="995.5" font-size="11" fill="#444" text-anchor="end">10</text>
<rect x="109.5" y="948.56" width="811.5" height="1" fill="#e4e4e4"/>
<text x="98.900" y="951.2" font-size="11" fill="#444" text-anchor="end">20</text>
<rect x="109.5" y="904.24" width="811.5" height="1" fill="#e4e4e4"/>
<text x="98.900" y="906.8" font-size="11" fill="#444" text-anchor="end">30</text>
<rect x="109.5" y="859.92" width="811.5" height="1" fill="#e4e4e4"/>
<text x="98.900" y="862.5" font-size="11" fill="#444" text-anchor="end">40</text>
<rect x="109.5" y="815.60" width="811.5" height="1" fill="#e4e4e4"/>
<text x="98.900" y="818.2" font-size="11" fill="#444" text-anchor="end">50</text>
<polyline points="109.50,953.49 177.12,918.04 244.75,904.74 312.38,882.58 380.00,913.60 447.62,869.28 515.25,891.44 582.88,847.12 650.50,904.74 718.12,878.15 785.75,895.88 853.38,957.92 921.00,1037.70" fill="none" stroke="#3092f2" stroke-width="4.500" stroke-linejoin="miter"/>
<g clip-path="url(#gc)" font-size="12" fill="#333" text-anchor="end">
<text transform="translate(113.00 1050) rotate(-45)">October 2022</text>
<text transform="translate(180.62 1050) rotate(-45)">November 2022</text>
<text transform="translate(248.25 1050) rotate(-45)">December 2022</text>
<text transform="translate(315.88 1050) rotate(-45)">January 2023</text>
<text transform="translate(383.50 1050) rotate(-45)">February 2023</text>
<text transform="translate(451.12 1050) rotate(-45)">March 2023</text>
<text transform="translate(518.75 1050) rotate(-45)">April 2023</text>
<text transform="translate(586.38 1050) rotate(-45)">May 2023</text>
<text transform="translate(654.00 1050) rotate(-45)">June 2023</text>
<text transform="translate(721.62 1050) rotate(-45)">July 2023</text>
<text transform="translate(789.25 1050) rotate(-45)">August 2023</text>
<text transform="translate(856.88 1050) rotate(-45)">September 2023</text>
<text transform="translate(924.50 1050) rotate(-45)">October 2023</text>
</g></svg>
<span class="t " id="t5" style="left:1034.45px;top:727.66px;font-size:18.3px;color:#111827;letter-spacing:0.843px;-webkit-text-stroke:0.22px #111827;">Latest Activity</span>
<div class="hr" style="left:1011.00px;top:774px;width:475.00px"></div>
<div class="hr" style="left:1011.00px;top:827px;width:475.00px"></div>
<div class="hr" style="left:1011.00px;top:880px;width:475.00px"></div>
<div class="hr" style="left:1011.00px;top:933px;width:475.00px"></div>
<div class="hr" style="left:1011.00px;top:986px;width:475.00px"></div>
<div class="hr" style="left:1011.00px;top:1039px;width:475.00px"></div>
<div class="hr" style="left:1011.00px;top:1092px;width:475.00px"></div>
<div class="hr" style="left:1011.00px;top:1145px;width:475.00px"></div>
<div class="hr" style="left:1011.00px;top:1198px;width:475.00px"></div>
<div class="hr" style="left:1011.00px;top:1251px;width:475.00px"></div>
<div class="av" style="left:1019px;top:785px;background:#724cb6">Sz</div>
<svg class="a" style="left:1038px;top:804px" width="13" height="13" viewBox="0 0 13 13"><circle cx="6.300" cy="6.300" r="5.600" fill="#ea5b0c" stroke="#fff" stroke-width=".7"/><path fill="#fff" d="M6.3 2.500l1.100 2.500 2.700.2-2.100 1.800.7 2.700-2.400-1.500-2.400 1.500.7-2.700-2.100-1.800 2.700-.2z"/></svg>
<span class="t " id="a0" style="left:1059.00px;top:790.98px;font-size:14.5px;color:#656c7a;letter-spacing:0.191px;">Szymon Wloszkiewicz left a <b>5 star</b> review...</span>
<svg class="a" style="left:1354.1000000000001px;top:789px" width="24" height="24" viewBox="0 0 48 48"><path fill="#FA2B27" d="M24 9.5c3.54 0 6.71 1.22 9.21 3.6l6.85-6.85C35.9 2.38 30.47 0 24 0 14.62 0 6.51 5.38 2.56 13.22l7.98 6.19C12.43 13.72 17.74 9.5 24 9.5z"/><path fill="#2877F6" d="M46.98 24.55c0-1.57-.15-3.09-.38-4.55H24v9.02h12.94c-.58 2.96-2.26 5.48-4.78 7.18l7.73 6c4.51-4.18 7.09-10.36 7.09-17.65z"/><path fill="#FFB229" d="M10.53 28.59c-.48-1.45-.76-2.99-.76-4.59s.27-3.14.76-4.59l-7.98-6.19C.92 16.46 0 20.12 0 24c0 3.88.92 7.54 2.56 10.78l7.97-6.19z"/><path fill="#12A245" d="M24 48c6.48 0 11.93-2.13 15.89-5.81l-7.73-6c-2.15 1.45-4.92 2.3-8.16 2.3-6.26 0-11.57-4.22-13.47-9.91l-7.98 6.19C6.51 42.62 14.62 48 24 48z"/></svg>
<span class="t " id="a0t" style="left:1394.50px;top:790.98px;font-size:14.5px;color:#656c7a;letter-spacing:0.151px;">4 days ago</span>
<div class="av" style="left:1019px;top:838px;background:#4a2a9c">d</div>
<span class="t " id="a1" style="left:1059.00px;top:843.98px;font-size:14.5px;color:#656c7a;letter-spacing:0.199px;">delicious delicious left a <b>3 star</b> review on</span>
<svg class="a" style="left:1336.9px;top:842px" width="24" height="24" viewBox="0 0 48 48"><path fill="#FA2B27" d="M24 9.5c3.54 0 6.71 1.22 9.21 3.6l6.85-6.85C35.9 2.38 30.47 0 24 0 14.62 0 6.51 5.38 2.56 13.22l7.98 6.19C12.43 13.72 17.74 9.5 24 9.5z"/><path fill="#2877F6" d="M46.98 24.55c0-1.57-.15-3.09-.38-4.55H24v9.02h12.94c-.58 2.96-2.26 5.48-4.78 7.18l7.73 6c4.51-4.18 7.09-10.36 7.09-17.65z"/><path fill="#FFB229" d="M10.53 28.59c-.48-1.45-.76-2.99-.76-4.59s.27-3.14.76-4.59l-7.98-6.19C.92 16.46 0 20.12 0 24c0 3.88.92 7.54 2.56 10.78l7.97-6.19z"/><path fill="#12A245" d="M24 48c6.48 0 11.93-2.13 15.89-5.81l-7.73-6c-2.15 1.45-4.92 2.3-8.16 2.3-6.26 0-11.57-4.22-13.47-9.91l-7.98 6.19C6.51 42.62 14.62 48 24 48z"/></svg>
<span class="t " id="a1t" style="left:1394.04px;top:843.98px;font-size:14.5px;color:#656c7a;letter-spacing:0.202px;">6 days ago</span>
<div class="av" style="left:1019px;top:891px;background:#2e6322">J</div>
<span class="t " id="a2" style="left:1059.00px;top:896.98px;font-size:14.5px;color:#656c7a;letter-spacing:0.252px;">Julie tibbetts left a <b>5 star</b> review on</span>
<svg class="a" style="left:1300.9px;top:895px" width="24" height="24" viewBox="0 0 48 48"><path fill="#FA2B27" d="M24 9.5c3.54 0 6.71 1.22 9.21 3.6l6.85-6.85C35.9 2.38 30.47 0 24 0 14.62 0 6.51 5.38 2.56 13.22l7.98 6.19C12.43 13.72 17.74 9.5 24 9.5z"/><path fill="#2877F6" d="M46.98 24.55c0-1.57-.15-3.09-.38-4.55H24v9.02h12.94c-.58 2.96-2.26 5.48-4.78 7.18l7.73 6c4.51-4.18 7.09-10.36 7.09-17.65z"/><path fill="#FFB229" d="M10.53 28.59c-.48-1.45-.76-2.99-.76-4.59s.27-3.14.76-4.59l-7.98-6.19C.92 16.46 0 20.12 0 24c0 3.88.92 7.54 2.56 10.78l7.97-6.19z"/><path fill="#12A245" d="M24 48c6.48 0 11.93-2.13 15.89-5.81l-7.73-6c-2.15 1.45-4.92 2.3-8.16 2.3-6.26 0-11.57-4.22-13.47-9.91l-7.98 6.19C6.51 42.62 14.62 48 24 48z"/></svg>
<span class="t " id="a2t" style="left:1393.50px;top:896.98px;font-size:14.5px;color:#656c7a;letter-spacing:0.017px;">1 week ago</span>
<div class="av" style="left:1019px;top:944px;background:#78909c">V</div>
<span class="t " id="a3" style="left:1059.00px;top:949.98px;font-size:14.5px;color:#656c7a;letter-spacing:0.145px;">Valentina Borza left a <b>5 star</b> review on</span>
<svg class="a" style="left:1317.7px;top:948px" width="24" height="24" viewBox="0 0 48 48"><path fill="#FA2B27" d="M24 9.5c3.54 0 6.71 1.22 9.21 3.6l6.85-6.85C35.9 2.38 30.47 0 24 0 14.62 0 6.51 5.38 2.56 13.22l7.98 6.19C12.43 13.72 17.74 9.5 24 9.5z"/><path fill="#2877F6" d="M46.98 24.55c0-1.57-.15-3.09-.38-4.55H24v9.02h12.94c-.58 2.96-2.26 5.48-4.78 7.18l7.73 6c4.51-4.18 7.09-10.36 7.09-17.65z"/><path fill="#FFB229" d="M10.53 28.59c-.48-1.45-.76-2.99-.76-4.59s.27-3.14.76-4.59l-7.98-6.19C.92 16.46 0 20.12 0 24c0 3.88.92 7.54 2.56 10.78l7.97-6.19z"/><path fill="#12A245" d="M24 48c6.48 0 11.93-2.13 15.89-5.81l-7.73-6c-2.15 1.45-4.92 2.3-8.16 2.3-6.26 0-11.57-4.22-13.47-9.91l-7.98 6.19C6.51 42.62 14.62 48 24 48z"/></svg>
<span class="t " id="a3t" style="left:1393.50px;top:949.98px;font-size:14.5px;color:#656c7a;letter-spacing:0.017px;">1 week ago</span>
<div class="av" style="left:1019px;top:997px;background:#2e6322">S</div>
<span class="t " id="a4" style="left:1059.00px;top:1002.98px;font-size:14.5px;color:#656c7a;letter-spacing:0.092px;">Sarah Clare left a <b>5 star</b> review on</span>
<svg class="a" style="left:1291.7px;top:1001px" width="24" height="24" viewBox="0 0 48 48"><path fill="#FA2B27" d="M24 9.5c3.54 0 6.71 1.22 9.21 3.6l6.85-6.85C35.9 2.38 30.47 0 24 0 14.62 0 6.51 5.38 2.56 13.22l7.98 6.19C12.43 13.72 17.74 9.5 24 9.5z"/><path fill="#2877F6" d="M46.98 24.55c0-1.57-.15-3.09-.38-4.55H24v9.02h12.94c-.58 2.96-2.26 5.48-4.78 7.18l7.73 6c4.51-4.18 7.09-10.36 7.09-17.65z"/><path fill="#FFB229" d="M10.53 28.59c-.48-1.45-.76-2.99-.76-4.59s.27-3.14.76-4.59l-7.98-6.19C.92 16.46 0 20.12 0 24c0 3.88.92 7.54 2.56 10.78l7.97-6.19z"/><path fill="#12A245" d="M24 48c6.48 0 11.93-2.13 15.89-5.81l-7.73-6c-2.15 1.45-4.92 2.3-8.16 2.3-6.26 0-11.57-4.22-13.47-9.91l-7.98 6.19C6.51 42.62 14.62 48 24 48z"/></svg>
<span class="t " id="a4t" style="left:1393.50px;top:1002.98px;font-size:14.5px;color:#656c7a;letter-spacing:0.017px;">1 week ago</span>
<div class="av" style="left:1019px;top:1050px;background:#512da8">E</div>
<span class="t " id="a5" style="left:1059.00px;top:1055.98px;font-size:14.5px;color:#656c7a;letter-spacing:0.128px;">Eileen Tomlin left a <b>5 star</b> review on</span>
<svg class="a" style="left:1301.5px;top:1054px" width="24" height="24" viewBox="0 0 48 48"><path fill="#FA2B27" d="M24 9.5c3.54 0 6.71 1.22 9.21 3.6l6.85-6.85C35.9 2.38 30.47 0 24 0 14.62 0 6.51 5.38 2.56 13.22l7.98 6.19C12.43 13.72 17.74 9.5 24 9.5z"/><path fill="#2877F6" d="M46.98 24.55c0-1.57-.15-3.09-.38-4.55H24v9.02h12.94c-.58 2.96-2.26 5.48-4.78 7.18l7.73 6c4.51-4.18 7.09-10.36 7.09-17.65z"/><path fill="#FFB229" d="M10.53 28.59c-.48-1.45-.76-2.99-.76-4.59s.27-3.14.76-4.59l-7.98-6.19C.92 16.46 0 20.12 0 24c0 3.88.92 7.54 2.56 10.78l7.97-6.19z"/><path fill="#12A245" d="M24 48c6.48 0 11.93-2.13 15.89-5.81l-7.73-6c-2.15 1.45-4.92 2.3-8.16 2.3-6.26 0-11.57-4.22-13.47-9.91l-7.98 6.19C6.51 42.62 14.62 48 24 48z"/></svg>
<span class="t " id="a5t" style="left:1393.50px;top:1055.98px;font-size:14.5px;color:#656c7a;letter-spacing:0.017px;">1 week ago</span>
<svg class="a" style="left:1019px;top:1103px" width="32" height="32" viewBox="0 0 32 32"><defs><clipPath id="pc"><circle cx="16" cy="16" r="16"/></clipPath><filter id="pb"><feGaussianBlur stdDeviation="1.1"/></filter></defs><g clip-path="url(#pc)"><rect width="32" height="32" fill="#45684f"/><g filter="url(#pb)"><rect x="-4" y="-4" width="40" height="40" fill="#41674d"/><ellipse cx="28" cy="7" rx="5" ry="6" fill="#2f4a38"/><ellipse cx="4" cy="17" rx="4" ry="6" fill="#7d7467"/><ellipse cx="4.500" cy="9.500" rx="2.800" ry="2" fill="#3f78b5"/><ellipse cx="26" cy="21" rx="8.500" ry="12" fill="#782f35"/><ellipse cx="19.800" cy="6" rx="4.600" ry="5.600" fill="#c28a78"/><ellipse cx="20.500" cy="11.500" rx="3.200" ry="2.600" fill="#dcc2b4"/><ellipse cx="12.200" cy="8" rx="5.200" ry="4.200" fill="#c4a27a"/><ellipse cx="14" cy="13.300" rx="4.300" ry="4.800" fill="#e2b39d"/><ellipse cx="17" cy="27.500" rx="6.500" ry="6.500" fill="#2a1f22"/><ellipse cx="7.800" cy="23" rx="6" ry="6.600" fill="#d6a794"/><ellipse cx="9" cy="25.500" rx="5" ry="1.300" fill="#8d7a66" transform="rotate(-8 9 25.500)"/></g></g></svg>
<span class="t " id="a6" style="left:1059.00px;top:1108.98px;font-size:14.5px;color:#656c7a;letter-spacing:0.153px;">Mary Groom left a <b>5 star</b> review on</span>
<svg class="a" style="left:1296.6000000000001px;top:1107px" width="24" height="24" viewBox="0 0 48 48"><path fill="#FA2B27" d="M24 9.5c3.54 0 6.71 1.22 9.21 3.6l6.85-6.85C35.9 2.38 30.47 0 24 0 14.62 0 6.51 5.38 2.56 13.22l7.98 6.19C12.43 13.72 17.74 9.5 24 9.5z"/><path fill="#2877F6" d="M46.98 24.55c0-1.57-.15-3.09-.38-4.55H24v9.02h12.94c-.58 2.96-2.26 5.48-4.78 7.18l7.73 6c4.51-4.18 7.09-10.36 7.09-17.65z"/><path fill="#FFB229" d="M10.53 28.59c-.48-1.45-.76-2.99-.76-4.59s.27-3.14.76-4.59l-7.98-6.19C.92 16.46 0 20.12 0 24c0 3.88.92 7.54 2.56 10.78l7.97-6.19z"/><path fill="#12A245" d="M24 48c6.48 0 11.93-2.13 15.89-5.81l-7.73-6c-2.15 1.45-4.92 2.3-8.16 2.3-6.26 0-11.57-4.22-13.47-9.91l-7.98 6.19C6.51 42.62 14.62 48 24 48z"/></svg>
<span class="t " id="a6t" style="left:1393.50px;top:1108.98px;font-size:14.5px;color:#656c7a;letter-spacing:0.017px;">1 week ago</span>
<div class="av" style="left:1019px;top:1156px;background:#bf360c">S</div>
<span class="t " id="a7" style="left:1059.00px;top:1161.98px;font-size:14.5px;color:#656c7a;letter-spacing:0.032px;">S Gill left a <b>1 star</b> review on</span>
<svg class="a" style="left:1246.7px;top:1160px" width="24" height="24" viewBox="0 0 48 48"><path fill="#FA2B27" d="M24 9.5c3.54 0 6.71 1.22 9.21 3.6l6.85-6.85C35.9 2.38 30.47 0 24 0 14.62 0 6.51 5.38 2.56 13.22l7.98 6.19C12.43 13.72 17.74 9.5 24 9.5z"/><path fill="#2877F6" d="M46.98 24.55c0-1.57-.15-3.09-.38-4.55H24v9.02h12.94c-.58 2.96-2.26 5.48-4.78 7.18l7.73 6c4.51-4.18 7.09-10.36 7.09-17.65z"/><path fill="#FFB229" d="M10.53 28.59c-.48-1.45-.76-2.99-.76-4.59s.27-3.14.76-4.59l-7.98-6.19C.92 16.46 0 20.12 0 24c0 3.88.92 7.54 2.56 10.78l7.97-6.19z"/><path fill="#12A245" d="M24 48c6.48 0 11.93-2.13 15.89-5.81l-7.73-6c-2.15 1.45-4.92 2.3-8.16 2.3-6.26 0-11.57-4.22-13.47-9.91l-7.98 6.19C6.51 42.62 14.62 48 24 48z"/></svg>
<span class="t " id="a7t" style="left:1393.50px;top:1161.98px;font-size:14.5px;color:#656c7a;letter-spacing:0.017px;">1 week ago</span>
<div class="av" style="left:1019px;top:1209px;background:#2e6322">P</div>
<svg class="a" style="left:1038px;top:1228px" width="13" height="13" viewBox="0 0 13 13"><circle cx="6.300" cy="6.300" r="5.600" fill="#ea5b0c" stroke="#fff" stroke-width=".7"/><path fill="#fff" d="M6.3 2.500l1.100 2.500 2.700.2-2.100 1.800.7 2.700-2.400-1.500-2.400 1.500.7-2.700-2.100-1.800 2.700-.2z"/></svg>
<span class="t " id="a8" style="left:1059.00px;top:1214.98px;font-size:14.5px;color:#656c7a;letter-spacing:0.106px;">Pal Sangha left a <b>4 star</b> review on</span>
<svg class="a" style="left:1289.7px;top:1213px" width="24" height="24" viewBox="0 0 48 48"><path fill="#FA2B27" d="M24 9.5c3.54 0 6.71 1.22 9.21 3.6l6.85-6.85C35.9 2.38 30.47 0 24 0 14.62 0 6.51 5.38 2.56 13.22l7.98 6.19C12.43 13.72 17.74 9.5 24 9.5z"/><path fill="#2877F6" d="M46.98 24.55c0-1.57-.15-3.09-.38-4.55H24v9.02h12.94c-.58 2.96-2.26 5.48-4.78 7.18l7.73 6c4.51-4.18 7.09-10.36 7.09-17.65z"/><path fill="#FFB229" d="M10.53 28.59c-.48-1.45-.76-2.99-.76-4.59s.27-3.14.76-4.59l-7.98-6.19C.92 16.46 0 20.12 0 24c0 3.88.92 7.54 2.56 10.78l7.97-6.19z"/><path fill="#12A245" d="M24 48c6.48 0 11.93-2.13 15.89-5.81l-7.73-6c-2.15 1.45-4.92 2.3-8.16 2.3-6.26 0-11.57-4.22-13.47-9.91l-7.98 6.19C6.51 42.62 14.62 48 24 48z"/></svg>
<span class="t " id="a8t" style="left:1394.04px;top:1214.98px;font-size:14.5px;color:#656c7a;letter-spacing:0.222px;">2 weeks ago</span>
<div class="av" style="left:1019px;top:1262px;background:#0f909f">c</div>
<svg class="a" style="left:1038px;top:1281px" width="13" height="13" viewBox="0 0 13 13"><circle cx="6.300" cy="6.300" r="5.600" fill="#ea5b0c" stroke="#fff" stroke-width=".7"/><path fill="#fff" d="M6.3 2.500l1.100 2.500 2.700.2-2.100 1.800.7 2.700-2.400-1.500-2.400 1.500.7-2.700-2.100-1.800 2.700-.2z"/></svg>
<span class="t " id="a9" style="left:1059.00px;top:1267.98px;font-size:14.5px;color:#656c7a;letter-spacing:0.182px;">c s left a <b>5 star</b> review on</span>
<svg class="a" style="left:1234.5px;top:1266px" width="24" height="24" viewBox="0 0 48 48"><path fill="#FA2B27" d="M24 9.5c3.54 0 6.71 1.22 9.21 3.6l6.85-6.85C35.9 2.38 30.47 0 24 0 14.62 0 6.51 5.38 2.56 13.22l7.98 6.19C12.43 13.72 17.74 9.5 24 9.5z"/><path fill="#2877F6" d="M46.98 24.55c0-1.57-.15-3.09-.38-4.55H24v9.02h12.94c-.58 2.96-2.26 5.48-4.78 7.18l7.73 6c4.51-4.18 7.09-10.36 7.09-17.65z"/><path fill="#FFB229" d="M10.53 28.59c-.48-1.45-.76-2.99-.76-4.59s.27-3.14.76-4.59l-7.98-6.19C.92 16.46 0 20.12 0 24c0 3.88.92 7.54 2.56 10.78l7.97-6.19z"/><path fill="#12A245" d="M24 48c6.48 0 11.93-2.13 15.89-5.81l-7.73-6c-2.15 1.45-4.92 2.3-8.16 2.3-6.26 0-11.57-4.22-13.47-9.91l-7.98 6.19C6.51 42.62 14.62 48 24 48z"/></svg>
<span class="t " id="a9t" style="left:1394.04px;top:1267.98px;font-size:14.5px;color:#656c7a;letter-spacing:0.222px;">2 weeks ago</span>
<span class="t " id="t6" style="left:37.63px;top:1237.66px;font-size:18.3px;color:#111827;letter-spacing:0.414px;-webkit-text-stroke:0.22px #111827;">Rating Breakdown</span>
<div class="hr" style="left:14px;top:1284px;width:973px"></div>
<svg class="a" style="left:160px;top:1327px" width="40" height="40" viewBox="0 0 48 48"><path fill="#FA2B27" d="M24 9.5c3.54 0 6.71 1.22 9.21 3.6l6.85-6.85C35.9 2.38 30.47 0 24 0 14.62 0 6.51 5.38 2.56 13.22l7.98 6.19C12.43 13.72 17.74 9.5 24 9.5z"/><path fill="#2877F6" d="M46.98 24.55c0-1.57-.15-3.09-.38-4.55H24v9.02h12.94c-.58 2.96-2.26 5.48-4.78 7.18l7.73 6c4.51-4.18 7.09-10.36 7.09-17.65z"/><path fill="#FFB229" d="M10.53 28.59c-.48-1.45-.76-2.99-.76-4.59s.27-3.14.76-4.59l-7.98-6.19C.92 16.46 0 20.12 0 24c0 3.88.92 7.54 2.56 10.78l7.97-6.19z"/><path fill="#12A245" d="M24 48c6.48 0 11.93-2.13 15.89-5.81l-7.73-6c-2.15 1.45-4.92 2.3-8.16 2.3-6.26 0-11.57-4.22-13.47-9.91l-7.98 6.19C6.51 42.62 14.62 48 24 48z"/></svg>
<span class="t " id="r6n0" style="left:354.46px;top:1300.98px;font-size:14.5px;color:#111827;">5</span>
<svg class="a" style="left:370.0px;top:1301px" width="20" height="20" viewBox="0 0 20 20"><path fill="#f8c132" d="M9.049 2.927c.3-.921 1.603-.921 1.902 0l1.07 3.292a1 1 0 00.95.69h3.462c.969 0 1.371 1.24.588 1.81l-2.8 2.034a1 1 0 00-.364 1.118l1.07 3.292c.3.921-.755 1.688-1.54 1.118l-2.8-2.034a1 1 0 00-1.175 0l-2.8 2.034c-.784.57-1.838-.197-1.539-1.118l1.07-3.292a1 1 0 00-.364-1.118L2.98 8.72c-.783-.57-.38-1.81.588-1.81h3.461a1 1 0 00.951-.69l1.07-3.292z"/></svg>
<div class="trk" style="left:402px;top:1305px;width:501px"><i style="width:322.3px"></i></div>
<span class="t " id="r6p0" style="left:914.60px;top:1300.98px;font-size:14.5px;color:#1f2937;letter-spacing:0.455px;">64.34%</span>
<span class="t " id="r6n1" style="left:355.10px;top:1332.98px;font-size:14.5px;color:#111827;">4</span>
<svg class="a" style="left:370.0px;top:1333px" width="20" height="20" viewBox="0 0 20 20"><path fill="#f8c132" d="M9.049 2.927c.3-.921 1.603-.921 1.902 0l1.07 3.292a1 1 0 00.95.69h3.462c.969 0 1.371 1.24.588 1.81l-2.8 2.034a1 1 0 00-.364 1.118l1.07 3.292c.3.921-.755 1.688-1.54 1.118l-2.8-2.034a1 1 0 00-1.175 0l-2.8 2.034c-.784.57-1.838-.197-1.539-1.118l1.07-3.292a1 1 0 00-.364-1.118L2.98 8.72c-.783-.57-.38-1.81.588-1.81h3.461a1 1 0 00.951-.69l1.07-3.292z"/></svg>
<div class="trk" style="left:402px;top:1337px;width:501px"><i style="width:113.0px"></i></div>
<span class="t " id="r6p1" style="left:914.76px;top:1332.98px;font-size:14.5px;color:#1f2937;letter-spacing:0.421px;">22.56%</span>
</div>
</body></html>
